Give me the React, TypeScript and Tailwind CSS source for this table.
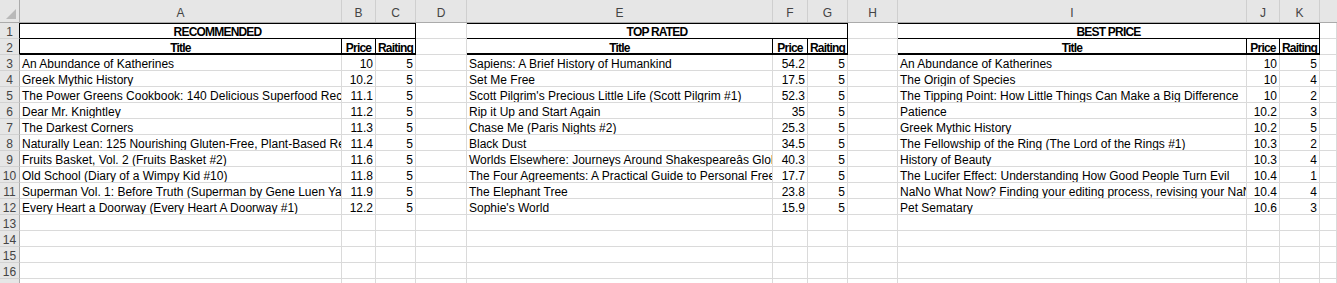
import type { ReactNode } from 'react'

// column widths include the 1px right gridline
const cols = [
  { key: 'A', w: 'w-[322px]' },
  { key: 'B', w: 'w-[34px]' },
  { key: 'C', w: 'w-[40px]' },
  { key: 'D', w: 'w-[51px]' },
  { key: 'E', w: 'w-[306px]' },
  { key: 'F', w: 'w-[35px]' },
  { key: 'G', w: 'w-[40px]' },
  { key: 'H', w: 'w-[50px]' },
  { key: 'I', w: 'w-[349px]' },
  { key: 'J', w: 'w-[33px]' },
  { key: 'K', w: 'w-[40px]' },
]

type Book = [string, number, number]

const recommended: Book[] = [
  ['An Abundance of Katherines', 10, 5],
  ['Greek Mythic History', 10.2, 5],
  ['The Power Greens Cookbook: 140 Delicious Superfood Recipes', 11.1, 5],
  ['Dear Mr. Knightley', 11.2, 5],
  ['The Darkest Corners', 11.3, 5],
  ['Naturally Lean: 125 Nourishing Gluten-Free, Plant-Based Recipes', 11.4, 5],
  ['Fruits Basket, Vol. 2 (Fruits Basket #2)', 11.6, 5],
  ['Old School (Diary of a Wimpy Kid #10)', 11.8, 5],
  ['Superman Vol. 1: Before Truth (Superman by Gene Luen Yang)', 11.9, 5],
  ['Every Heart a Doorway (Every Heart A Doorway #1)', 12.2, 5],
]

const topRated: Book[] = [
  ['Sapiens: A Brief History of Humankind', 54.2, 5],
  ['Set Me Free', 17.5, 5],
  ["Scott Pilgrim's Precious Little Life (Scott Pilgrim #1)", 52.3, 5],
  ['Rip it Up and Start Again', 35, 5],
  ['Chase Me (Paris Nights #2)', 25.3, 5],
  ['Black Dust', 34.5, 5],
  ['Worlds Elsewhere: Journeys Around Shakespeareâs Globe', 40.3, 5],
  ['The Four Agreements: A Practical Guide to Personal Freedom', 17.7, 5],
  ['The Elephant Tree', 23.8, 5],
  ["Sophie's World", 15.9, 5],
]

const bestPrice: Book[] = [
  ['An Abundance of Katherines', 10, 5],
  ['The Origin of Species', 10, 4],
  ['The Tipping Point: How Little Things Can Make a Big Difference', 10, 2],
  ['Patience', 10.2, 3],
  ['Greek Mythic History', 10.2, 5],
  ['The Fellowship of the Ring (The Lord of the Rings #1)', 10.3, 2],
  ['History of Beauty', 10.3, 4],
  ['The Lucifer Effect: Understanding How Good People Turn Evil', 10.4, 1],
  ['NaNo What Now? Finding your editing process, revising your NaNoWriMo book', 10.4, 4],
  ['Pet Sematary', 10.6, 3],
]

const sections = [
  { name: 'RECOMMENDED', books: recommended },
  { name: 'TOP RATED', books: topRated },
  { name: 'BEST PRICE', books: bestPrice },
]

const cell = 'h-4 shrink-0 overflow-hidden whitespace-nowrap border-r border-b border-[#dadada] flex items-end leading-[11px]'
const bold = 'justify-center font-bold tracking-[-0.8px] border-r-black border-b-black'

function RowHead({ n, dark }: { n: number; dark?: boolean }) {
  return (
    <div
      className={`h-4 w-[20px] shrink-0 overflow-hidden flex items-end justify-center leading-[11px] bg-[#e6e6e6] border-b border-[#d2d2d2] border-r text-[#444] ${dark ? 'border-r-black' : 'border-r-[#ababab]'}`}
    >
      {n}
    </div>
  )
}

function Cell({ w, className = '', children }: { w: string; className?: string; children?: ReactNode }) {
  return <div className={`${cell} ${w} ${className}`}>{children}</div>
}

export default function App() {
  const emptyRows = [13, 14, 15, 16, 17]
  return (
    <div
      className="w-[1337px] h-[283px] overflow-hidden bg-white text-[12px] text-black"
      style={{ fontFamily: '"Liberation Sans", Arial, sans-serif' }}
    >
      {/* column header */}
      <div className="flex h-[23px] bg-[#e6e6e6] border-b border-[#ababab] text-[#444]">
        <div className="w-[20px] shrink-0 border-r border-[#ababab] relative">
          <svg className="absolute right-[3px] bottom-[3px]" width="10" height="10" viewBox="0 0 10 10">
            <polygon points="10,0 10,10 0,10" fill="#b9b9b9" />
          </svg>
        </div>
        {cols.map((c) => (
          <div key={c.key} className={`${c.w} shrink-0 border-r border-[#cfcfcf] flex items-end justify-center`}>
            {c.key}
          </div>
        ))}
        <div className="flex-1" />
      </div>

      {/* row 1: section titles */}
      <div className="flex">
        <RowHead n={1} dark />
        {sections.map((s, i) => (
          <div key={s.name} className="flex">
            <div
              className={`${cell} ${i === 0 ? 'w-[396px]' : i === 1 ? 'w-[381px]' : 'w-[422px]'} ${bold} shadow-[inset_0_1px_0_#000]`}
            >
              {s.name}
            </div>
            {i < 2 && <Cell w={i === 0 ? 'w-[51px]' : 'w-[50px]'} />}
          </div>
        ))}
        <div className={`${cell} flex-1`} />
      </div>

      {/* row 2: column titles */}
      <div className="flex">
        <RowHead n={2} dark />
        {sections.map((s, i) => (
          <div key={s.name} className="flex">
            <Cell w={cols[i * 4].w} className={`${bold} shadow-[inset_0_-1px_0_#000]`}>
              Title
            </Cell>
            <Cell w={cols[i * 4 + 1].w} className={`${bold} shadow-[inset_0_-1px_0_#000]`}>
              Price
            </Cell>
            <Cell w={cols[i * 4 + 2].w} className={`${bold} shadow-[inset_0_-1px_0_#000]`}>
              Raiting
            </Cell>
            {i < 2 && <Cell w={cols[i * 4 + 3].w} />}
          </div>
        ))}
        <div className={`${cell} flex-1`} />
      </div>

      {/* data rows */}
      {recommended.map((_, r) => (
        <div key={r} className="flex">
          <RowHead n={r + 3} />
          {sections.map((s, i) => {
            const [title, price, rating] = s.books[r]
            return (
              <div key={s.name} className="flex">
                <Cell w={cols[i * 4].w} className="pl-[2px]">
                  {title}
                </Cell>
                <Cell w={cols[i * 4 + 1].w} className="justify-end pr-[2px]">
                  {price}
                </Cell>
                <Cell w={cols[i * 4 + 2].w} className="justify-end pr-[2px]">
                  {rating}
                </Cell>
                {i < 2 && <Cell w={cols[i * 4 + 3].w} />}
              </div>
            )
          })}
          <div className={`${cell} flex-1`} />
        </div>
      ))}

      {emptyRows.map((n) => (
        <div key={n} className="flex">
          <RowHead n={n} />
          {cols.map((c) => (
            <Cell key={c.key} w={c.w} />
          ))}
          <div className={`${cell} flex-1`} />
        </div>
      ))}
    </div>
  )
}
